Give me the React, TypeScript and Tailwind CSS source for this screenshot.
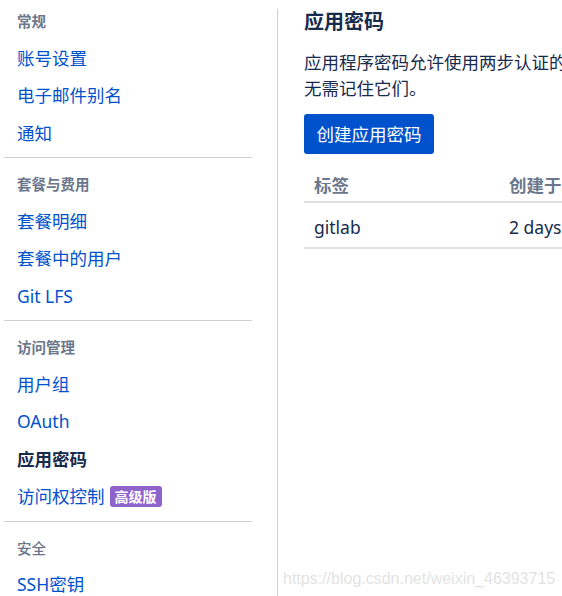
const font = { fontFamily: '"Noto Sans", "Noto Sans CJK SC", sans-serif' };

type Item = { label: string; active?: boolean; badge?: string };

const sections: { title: string; light?: boolean; items: Item[] }[] = [
  { title: "常规", items: [{ label: "账号设置" }, { label: "电子邮件别名" }, { label: "通知" }] },
  { title: "套餐与费用", items: [{ label: "套餐明细" }, { label: "套餐中的用户" }, { label: "Git LFS" }] },
  {
    title: "访问管理",
    items: [
      { label: "用户组" },
      { label: "OAuth" },
      { label: "应用密码", active: true },
      { label: "访问权控制", badge: "高级版" },
    ],
  },
  { title: "安全", light: true, items: [{ label: "SSH密钥" }] },
];

export default function App() {
  return (
    <div className="relative w-[562px] h-[596px] overflow-hidden bg-white" style={font}>
      <div className="flex h-full">
        {/* sidebar */}
        <div className="w-[278px] shrink-0 pt-[9px]">
          <div className="h-full border-r border-[#cfcfcf] pr-[25px]">
            {sections.map((s, i) => (
              <div key={s.title} className={i > 0 ? "border-t border-[#cfcfcf] ml-[4px]" : "ml-[4px]"}>
                <div
                  className={`pl-[13px] text-[14.5px] text-[#6b778c] leading-[20px] ${i === 0 ? "pt-[2px]" : "pt-[16px]"} pb-[8px] ${s.light ? "font-medium" : "font-bold"}`}
                >
                  {s.title}
                </div>
                <div className="pb-[5.5px]">
                  {s.items.map((it) => (
                    <div key={it.label} className="pl-[13px] h-[37.5px] flex items-center text-[17.5px] leading-[24px]">
                      <span className={it.active ? "font-bold text-[#172b4d]" : "text-[#0052cc]"}>{it.label}</span>
                      {it.badge && (
                        <span className="ml-[5px] rounded-[3px] bg-[#8f63cc] px-[5px] text-[14px] font-bold leading-[21px] text-white">
                          {it.badge}
                        </span>
                      )}
                    </div>
                  ))}
                </div>
              </div>
            ))}
          </div>
        </div>

        {/* main */}
        <div className="pl-[26px] pt-[8px] w-[640px] shrink-0">
          <h1 className="text-[20px] font-bold text-[#172b4d] leading-[28px]">应用密码</h1>
          <p className="mt-[13px] text-[17.5px] leading-[26px] text-[#172b4d]">
            <span className="block whitespace-nowrap">应用程序密码允许使用两步认证的用户通过Sourcetree等应用访问其Bitbucket帐户。</span>
            <span className="block whitespace-nowrap">无需记住它们。</span>
          </p>
          <button className="mt-[13px] h-[40px] w-[130px] rounded-[3px] bg-[#0052cc] text-[17.5px] text-white">
            创建应用密码
          </button>
          <table className="mt-[13px] w-[380px] text-[17.5px] text-[#172b4d]">
            <thead>
              <tr className="border-b-2 border-[#dfe1e6]">
                <th className="h-[35px] pl-[10px] pb-[3px] align-bottom text-left font-bold text-[#6b778c]">标签</th>
                <th className="h-[35px] pl-[10px] pb-[3px] align-bottom text-left font-bold text-[#6b778c] whitespace-nowrap">创建于</th>
              </tr>
            </thead>
            <tbody>
              <tr className="border-b-2 border-[#dfe1e6]">
                <td className="h-[46px] pl-[10px] pt-[4px] w-[195px]">gitlab</td>
                <td className="h-[46px] pl-[10px] pt-[4px] whitespace-nowrap">2 days ago</td>
              </tr>
            </tbody>
          </table>
        </div>
      </div>
      <div className="absolute left-[283px] top-[567px] text-[16px] text-[#e3e3e3] whitespace-nowrap" style={{ fontFamily: '"Liberation Sans", Arial, sans-serif' }}>
        https://blog.csdn.net/weixin_46393715
      </div>
    </div>
  );
}
